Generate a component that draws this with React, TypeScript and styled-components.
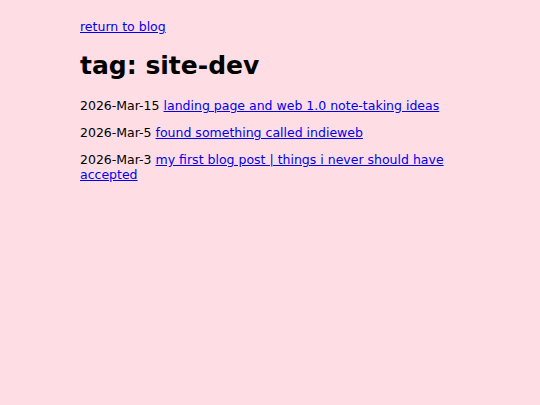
import React from "react";
import styled, { createGlobalStyle } from "styled-components";

const GlobalStyle = createGlobalStyle`
  html, body {
    margin: 0;
    background: #ffdde4;
  }
  body {
    font-family: "DejaVu Sans", sans-serif;
    font-size: 12.5px;
    color: #000;
  }
`;

const Page = styled.main`
  max-width: 380px;
  margin: 0 auto;
  padding-top: 19px;
`;

const BackLink = styled.a`
  color: #0000ee;
  line-height: 15px;
`;

const Heading = styled.h1`
  font-size: 25px;
  font-weight: bold;
  margin: 17px 0 18px;
`;

const Entry = styled.p`
  margin: 0 0 12px;
  line-height: 15px;
`;

const PostLink = styled.a`
  color: #0000ee;
`;

const posts = [
  { date: "2026-Mar-15", title: "landing page and web 1.0 note-taking ideas" },
  { date: "2026-Mar-5", title: "found something called indieweb" },
  { date: "2026-Mar-3", title: "my first blog post | things i never should have accepted" },
];

const App = () => {
  return (
    <>
      <GlobalStyle />
      <Page>
        <BackLink href="#">return to blog</BackLink>
        <Heading>tag: site-dev</Heading>
        {posts.map((post) => (
          <Entry key={post.date}>
            {post.date} <PostLink href="#">{post.title}</PostLink>
          </Entry>
        ))}
      </Page>
    </>
  );
};

export default App;
